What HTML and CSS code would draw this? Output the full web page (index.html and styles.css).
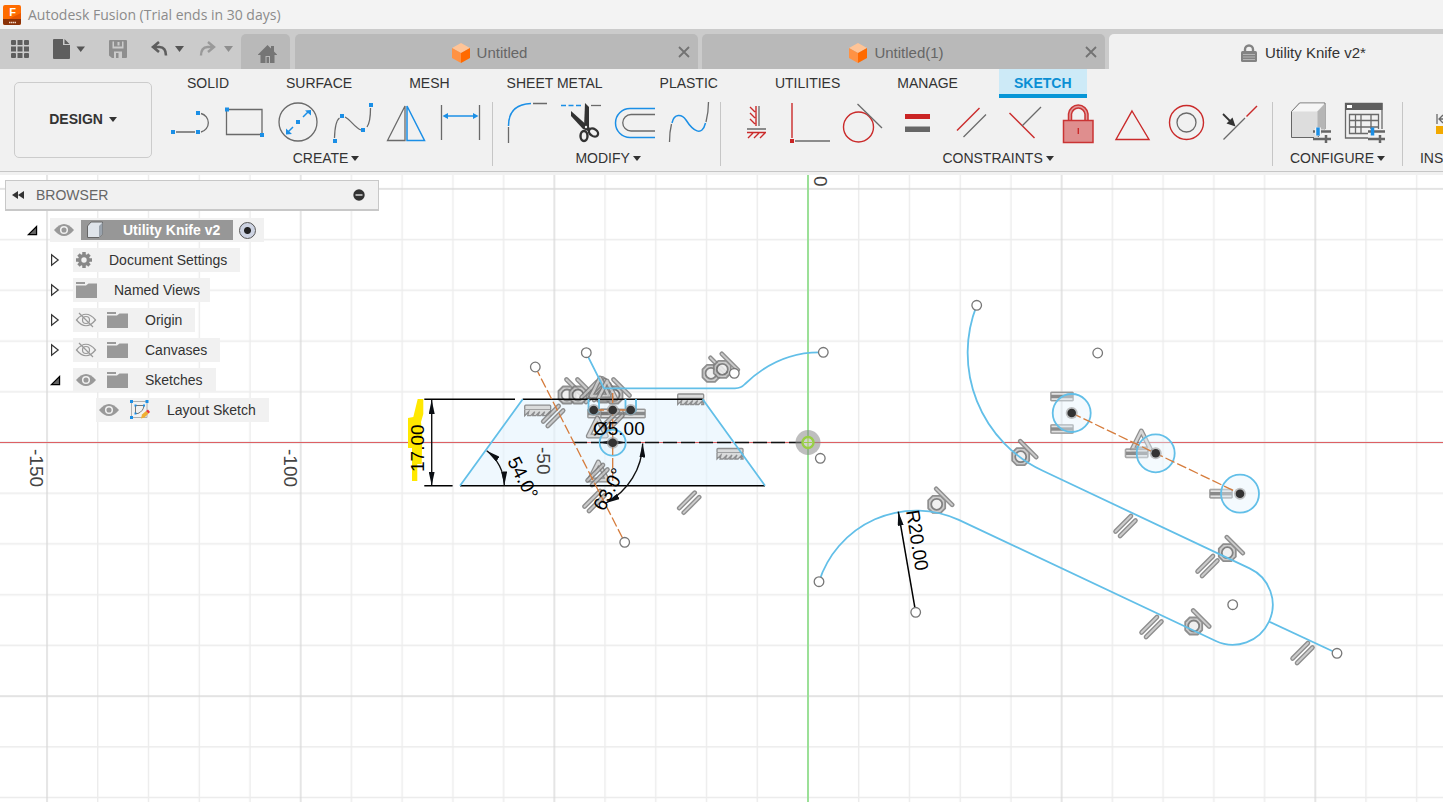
FILE: index.html
```html
<!DOCTYPE html>
<html lang="en">
<head>
<meta charset="utf-8">
<title>Autodesk Fusion</title>
<link rel="stylesheet" href="styles.css">
</head>
<body>
<div class="app">
  <header class="titlebar">
    <svg class="logo" width="18" height="20" viewBox="0 0 18 20" aria-hidden="true">
      <rect width="18" height="20" rx="2" fill="#ff6b00"/>
      <path d="M18 8V15H4z" fill="#e85600"/>
      <path d="M0 14H18V18a2 2 0 0 1-2 2H2a2 2 0 0 1-2-2z" fill="#8a3208"/>
      <text x="9.500" y="11" class="logo-letter">F</text>
      <path d="M6 17.500H13" stroke="#f3d9c8" stroke-width="1.500" stroke-dasharray="1.500 .5"/>
    </svg>
    <span>Autodesk Fusion (Trial ends in 30 days)</span>
  </header>

  <div class="tabstrip">
    <div class="quick">
      <button class="q q-grid" aria-label="Data panel"><svg width="18" height="18" viewBox="0 0 18 18"><g fill="#5e5e5e"><rect width="5" height="5" rx="1"/><rect x="6.500" width="5" height="5"/><rect x="13" width="5" height="5" rx="1"/><rect y="6.500" width="5" height="5"/><rect x="6.500" y="6.500" width="5" height="5"/><rect x="13" y="6.500" width="5" height="5"/><rect y="13" width="5" height="5" rx="1"/><rect x="6.500" y="13" width="5" height="5"/><rect x="13" y="13" width="5" height="5" rx="1"/></g></svg></button>
      <button class="q q-file" aria-label="File"><svg width="33" height="20" viewBox="0 0 33 20"><path d="M1 0H10V6H17V19a1 1 0 0 1-1 1H1a1 1 0 0 1-1-1V1a1 1 0 0 1 1-1z M11.500 0L16.500 5H11.500z" fill="#5e5e5e"/><path d="M23.500 7.500H32L27.700 13z" fill="#555"/></svg></button>
      <button class="q q-save" aria-label="Save"><svg width="18" height="18" viewBox="0 0 18 18"><path d="M1 0H17a1 1 0 0 1 1 1V17a1 1 0 0 1-1 1H3L0 15.500V1a1 1 0 0 1 1-1z" fill="#8e8e8e"/><path d="M3.500 1.500H14.500V8.500H3.500z M5 11.500H13V18H5z" fill="#cbcbcb"/><path d="M5 1H13V6.500H5z M7 13H9.500V18H7z" fill="#8e8e8e"/><path d="M9.500 2V5.500" stroke="#cbcbcb" stroke-width="2"/></svg></button>
      <button class="q q-undo" aria-label="Undo"><svg width="34" height="16" viewBox="0 0 34 16"><path d="M8 1L2 6L8 11M2.500 6H8.500Q15 6.500 15 14.500" fill="none" stroke="#5e5e5e" stroke-width="2.600"/><path d="M24 5H33L28.500 11z" fill="#555"/></svg></button>
      <button class="q" aria-label="Redo"><svg width="34" height="16" viewBox="0 0 34 16"><path d="M9 1L15 6L9 11M14.500 6H8.500Q2 6.500 2 14.500" fill="none" stroke="#999" stroke-width="2.400"/><path d="M25 5H34L29.500 11z" fill="#8e8e8e"/></svg></button>
    </div>
    <button class="home" aria-label="Home"><svg width="19" height="18" viewBox="0 0 19 18"><path d="M9.500 0L13 3.500V1H16V6.500L19 9.500V10H16.500V18H12V11H7.500V18H2.500V10H0V9.500z" fill="#757575"/><path d="M8.500 12H11V18H8.500z" fill="#757575"/></svg></button>
    <div class="doc"><button class="doc-name"><svg class="cube" width="18" height="20" viewBox="0 0 18 20"><path d="M9 0L18 5L9 10L0 5z" fill="#ffc497"/><path d="M0 5L9 10V20L0 15z" fill="#ff9243"/><path d="M18 5L9 10V20L18 15z" fill="#ff6a00"/></svg>Untitled</button><button class="close" aria-label="Close"><svg width="12" height="12" viewBox="0 0 12 12"><path d="M1 1L11 11M11 1L1 11" stroke="#737373" stroke-width="1.800"/></svg></button></div>
    <div class="doc"><button class="doc-name"><svg class="cube" width="18" height="20" viewBox="0 0 18 20"><path d="M9 0L18 5L9 10L0 5z" fill="#ffc497"/><path d="M0 5L9 10V20L0 15z" fill="#ff9243"/><path d="M18 5L9 10V20L18 15z" fill="#ff6a00"/></svg>Untitled(1)</button><button class="close" aria-label="Close"><svg width="12" height="12" viewBox="0 0 12 12"><path d="M1 1L11 11M11 1L1 11" stroke="#737373" stroke-width="1.800"/></svg></button></div>
    <div class="doc doc-active"><button class="doc-name"><svg class="cube" width="16" height="18" viewBox="0 0 16 18"><path d="M4 8V5.500a4 4 0 0 1 8 0V8" fill="none" stroke="#838383" stroke-width="2.400"/><rect y="7" width="16" height="11" rx="1.500" fill="#838383"/><path d="M2 10.500H14M2 13H14M2 15.500H14" stroke="#b5b5b5"/></svg>Utility Knife v2*</button><button class="close" aria-label="Close"></button></div>
  </div>

  <div class="ribbon">
    <button class="workspace-switch">DESIGN <i class="caret"></i></button>
    <div class="ribbon-main">
      <nav class="modes">
        <button class="mode">SOLID</button><button class="mode">SURFACE</button><button class="mode">MESH</button><button class="mode">SHEET METAL</button><button class="mode">PLASTIC</button><button class="mode">UTILITIES</button><button class="mode">MANAGE</button><button class="mode mode-on">SKETCH</button>
      </nav>
      <div class="groups">
        <section class="group group-first">
          <div class="tools">
            <button class="tool" aria-label="Line"><svg viewBox="0 0 40 40"><path class="g" d="M5 30H24M30 11.500a9.500 9.500 0 0 1 0 18.500"/><path class="bf" d="M0 28h4v4H0zM25 28h4v4h-4zM25 9h4v4h-4z"/></svg></button>
            <button class="tool" aria-label="Rectangle"><svg viewBox="0 0 40 40"><path class="g" d="M1.500 7.500H37V32.500H1.500z"/><path class="bf" d="M0 5.500h4v4H0zM35 31h4v4h-4z"/></svg></button>
            <button class="tool" aria-label="Circle"><svg viewBox="0 0 40 40"><circle class="g" cx="19" cy="20" r="19"/><path class="b" d="M9 30L14 25M24 15L29 10"/><path class="bf" d="M17 18h4v4h-4zM32 8V13.500L26 8.500zM7 32.500V26.500L13 32z"/></svg></button>
            <button class="tool" aria-label="Spline"><svg viewBox="0 0 40 40"><path class="g" d="M1.500 36Q2 19 6.500 16M12 15C18 18 22 26 28 28M34 25Q37.500 20 37.500 6"/><path class="bf" d="M0 37h4v4H0zM7 12h4v4H7zM28 26h4v4h-4zM36 1h4v4h-4z"/></svg></button>
            <button class="tool" aria-label="Mirror"><svg viewBox="0 0 40 40"><path class="g" d="M18 4V38.500H.5z"/><path class="b" d="M20 4V38.500H37.500z"/></svg></button>
            <button class="tool" aria-label="Sketch dimension"><svg viewBox="0 0 40 40"><path class="g" d="M.5 3V38M38.500 3V38"/><path class="b" d="M4 14H35"/><path class="bf" d="M1.500 14L7 11V17zM37.500 14L32 11V17z"/></svg></button>
          </div>
          <button class="group-label">CREATE <i class="caret"></i></button>
        </section>
        <section class="group">
          <div class="tools">
            <button class="tool" aria-label="Fillet"><svg viewBox="0 0 40 40"><path class="g" d="M1.500 25V41M26 1.500H40"/><path class="b" d="M1.500 24C1.500 9 10 2 24 1.500"/></svg></button>
            <button class="tool" aria-label="Trim"><svg viewBox="0 0 40 40"><path class="b" d="M0 3.500H21" stroke-dasharray="5 2.500"/><path class="g" d="M30 3.500H40"/><path d="M10 9V14L22 27L27 29L29 26z" fill="#333"/><path d="M24 1L28 5V26L23 26z" fill="#333"/><ellipse cx="23" cy="34" rx="3.500" ry="5" fill="none" stroke="#333" stroke-width="2.400"/><ellipse cx="32.500" cy="30.500" rx="5" ry="3.500" transform="rotate(35 32.500 30.500)" fill="none" stroke="#333" stroke-width="2.400"/><circle cx="25" cy="25" r="1.200" fill="#eee"/></svg></button>
            <button class="tool" aria-label="Offset"><svg viewBox="0 0 40 40"><path class="b" d="M40 6.500H15a14.500 14.500 0 0 0 0 29H40"/><path class="g" d="M40 12.500H16a8.200 8.200 0 0 0 0 16.500H40"/></svg></button>
            <button class="tool" aria-label="Blend curve"><svg viewBox="0 0 40 40"><path class="g" d="M.5 40Q.5 30 2.500 22M37 20Q39.500 10 39.500 0"/><path class="b" d="M3 21C5 11 13 12 17 18C24 29 33 35 36.500 21"/></svg></button>
          </div>
          <button class="group-label">MODIFY <i class="caret"></i></button>
        </section>
        <section class="group">
          <div class="tools">
            <button class="tool" aria-label="Horizontal/Vertical"><svg viewBox="0 0 40 40"><path class="r" d="M21 4V24M15 5L20 10M15 11L20 16M15 17L20 22M12 30.500H31M18 31L13 36M24 31L19 36M30 31L25 36"/><path class="g" d="M24 4V24M12 27H31"/></svg></button>
            <button class="tool" aria-label="Coincident"><svg viewBox="0 0 40 40"><path class="r" d="M3 1V36"/><path class="g" d="M6 39H41"/><path class="rf" d="M1 37h4v4H1z"/></svg></button>
            <button class="tool" aria-label="Tangent"><svg viewBox="0 0 40 40"><circle class="r" cx="15.500" cy="25" r="15"/><path class="g" d="M14.500 2L39 26"/></svg></button>
            <button class="tool" aria-label="Equal"><svg viewBox="0 0 40 40"><path class="rf" d="M8 12H33V17H8z"/><path d="M8 24.500H33V30H8z" fill="#666"/></svg></button>
            <button class="tool" aria-label="Parallel"><svg viewBox="0 0 40 40"><path class="r" d="M6 28.500L28.500 6"/><path class="g" d="M12.500 35L35 12.500"/></svg></button>
            <button class="tool" aria-label="Perpendicular"><svg viewBox="0 0 40 40"><path class="r" d="M4.500 11L29.500 36"/><path class="g" d="M17 24L36 5"/></svg></button>
            <button class="tool" aria-label="Fix/Unfix"><svg viewBox="0 0 40 40"><path d="M11 18V12a8.300 8.300 0 0 1 16.500 0V18" fill="none" stroke="#ca3434" stroke-width="4.500"/><path d="M11 18V12a8.300 8.300 0 0 1 16.500 0V18" fill="none" stroke="#e29a9a" stroke-width="1.500"/><path d="M4.500 18.500H34V40.500H4.500z" fill="#df8e8e" stroke="#ca3434" stroke-width="1.500"/><path class="r" d="M19.300 26V32"/></svg></button>
            <button class="tool" aria-label="MidPoint"><svg viewBox="0 0 40 40"><path class="r" d="M19 9L36 37.500H3z"/></svg></button>
            <button class="tool" aria-label="Concentric"><svg viewBox="0 0 40 40"><circle class="r" cx="19.500" cy="20.500" r="17"/><circle class="g" cx="19.500" cy="20.500" r="9.500"/></svg></button>
            <button class="tool" aria-label="Collinear"><svg viewBox="0 0 40 40"><path class="g" d="M2.500 37.500L24 16"/><path class="r" d="M25.500 14.500L36 4"/><path d="M2 12L9 19" stroke="#333" stroke-width="1.800"/><path d="M14.500 24.500L5.500 21.500L11.500 15.500z" fill="#333"/></svg></button>
          </div>
          <button class="group-label">CONSTRAINTS <i class="caret"></i></button>
        </section>
        <section class="group group-wide">
          <div class="tools">
            <button class="tool" aria-label="Configure model"><svg viewBox="0 0 40 40"><path d="M1.500 9.500L9.500 1H35V27L27.500 35.500H1.500z" fill="#ddd" stroke="#666"/><path d="M2 9.500L10 1.500H34.500L27 9.500z" fill="#f6f6f6"/><path d="M27.500 9.500L35 1.500V27L27.500 35z" fill="#b5b5b5"/><path d="M24 27.500H36V31.500H24zM24 35H36V39H24z" fill="#f1f1f1"/><path d="M23 29.500H41M23 37H41M36 33V41" stroke="#666" stroke-width="2.500"/><path d="M28 25.500V33.500" stroke="#f1f1f1" stroke-width="6"/><path d="M28 25.500V33.500" stroke="#1b8fe6" stroke-width="3.500"/></svg></button>
            <button class="tool" aria-label="Configuration table"><svg viewBox="0 0 40 40"><path class="g" d="M1.500 1.500H38V36H1.500z"/><path d="M1 1H38.500V8H1z" fill="#5e5e5e"/><path d="M3 3H8V6H3z" fill="#fff"/><path class="g" d="M5.500 12.500H34.500V31.500H5.500zM5.500 18.500H34.500M5.500 25H34.500M11.500 12.500V31.500M17 12.500V31.500M27 12.500V31.500"/><path d="M24 27H42V41H24z" fill="#f1f1f1"/><path d="M24 29.500H41M24 37H41M36 33V41" stroke="#666" stroke-width="2.500"/><path d="M28.500 25.500V33.500" stroke="#1b8fe6" stroke-width="3.500"/></svg></button>
          </div>
          <button class="group-label">CONFIGURE <i class="caret"></i></button>
        </section>
        <section class="group group-wide">
          <div class="tools">
            <button class="tool" aria-label="Measure"><svg viewBox="0 0 40 40"><path class="g" d="M1 12V22M39 12V22M3 17H37M7 13L3 17L7 21"/><path d="M0 24H40V32H0z" fill="#f2a900"/></svg></button>
          </div>
          <button class="group-label">INSPECT <i class="caret"></i></button>
        </section>
      </div>
    </div>
  </div>

  <main class="workspace">
    <svg class="canvas" role="img" aria-label="Layout Sketch">
      <defs>
        <pattern id="grid" width="253.650" height="253.650" patternUnits="userSpaceOnUse" patternTransform="translate(681.200 315.700)">
          <path d="M25.400 0V254M76.100 0V254M177.500 0V254M228.200 0V254M0 25.400H254M0 76.100H254M0 177.500H254M0 228.200H254" stroke="#ececec" stroke-width="1.400"/>
          <path d="M126.800 0V254M0 126.800H254" stroke="#dadada" stroke-width="1.400"/>
        </pattern>
        <marker id="arrow" viewBox="0 0 14 6" refX="14" refY="3" markerWidth="14" markerHeight="6" markerUnits="userSpaceOnUse" orient="auto-start-reverse"><path d="M14 3L0 0V6z" fill="#0b0f14"/></marker>
        <g id="eq"><rect x="-11.500" y="-4.500" width="23" height="9" rx="1" class="halo"/><rect x="-10.500" y="-3.500" width="21" height="1.800" class="slot"/><rect x="-10.500" y="1.700" width="21" height="1.800" class="slot"/></g>
        <g id="par"><path d="M-9.500 6.500L6 -9M-5 11L10.500 -4.500" class="tube"/><path d="M-9.500 6.500L6 -9M-5 11L10.500 -4.500" class="core"/></g>
        <g id="tan"><path d="M-4 -8.500H4L8.500 -4V4L4 8.500H-4L-8.500 4V-4z" class="ring"/><circle r="5.500" class="hole"/><path d="M-.5 -15.500L15.500 .5" class="tube"/><path d="M-.5 -15.500L15.500 .5" class="core"/></g>
        <g id="hat"><rect x="-13" y="-5.500" width="26" height="4.500" rx="1" class="bar"/><path d="M-13 -1V5L-9 1L-10 5H-7L-3 1L-5 5H-2L2 1L0 5H3L7 1L5 5H8L12 1L11 5H13V-1" class="bar"/></g>
        <g id="mid"><path d="M0 -10L9 8H-9z" class="tritube"/><path d="M0 -10L9 8H-9z" class="tricore"/></g>
        <g id="dot"><circle r="6" fill="#999" fill-opacity=".6"/><circle r="4.300" fill="#333"/></g>
        <circle id="end" r="4.800" fill="#fff" stroke="#777" stroke-width="1.300"/>
      </defs>
      <g transform="translate(0 -175)">
        <rect y="175" width="100%" height="100%" fill="url(#grid)"/>
        <path d="M522.700 399.300H702.700L765 485.700H460z" fill="#e4f3fd" fill-opacity=".6"/>
        <line x1="0" y1="442.500" x2="100%" y2="442.500" stroke="#de6064" stroke-width="1.200"/>
        <path d="M808 175V3000" stroke="#8fe08b" stroke-width="1.700"/>
        <g class="axis-label">
          <text transform="translate(30 449) rotate(90)">-150</text>
          <text transform="translate(284 449) rotate(90)">-100</text>
          <text transform="translate(537 447) rotate(90)">-50</text>
          <text transform="translate(814 176) rotate(90)">0</text>
        </g>
        <path d="M417.700 399H423.300V414L421 422L422.300 435L421.700 464H417.300V481H412V448H408V418L413.300 417z" fill="#ffe800"/>

        <g class="mark">
          <use href="#hat" x="537.700" y="410.700"/><use href="#par" x="552.700" y="415"/>
          <use href="#tan" x="567" y="395"/><use href="#tan" x="578" y="395"/><use href="#tan" x="603" y="394"/><use href="#tan" x="614" y="395"/>
          <use href="#par" x="591" y="391"/><use href="#par" x="599" y="389"/><use href="#mid" x="600" y="388"/><use href="#mid" x="607" y="391"/>
          <use href="#eq" x="599" y="413.500"/><use href="#eq" x="612" y="413.500"/><use href="#eq" x="634" y="413.500"/><use href="#par" x="612" y="420"/>
          <use href="#mid" x="597.300" y="428"/><use href="#mid" x="598.300" y="472"/><use href="#par" x="597" y="474"/><use href="#par" x="594" y="500"/>
          <use href="#hat" x="690.700" y="399.500"/><use href="#hat" x="730" y="454"/><use href="#par" x="688.700" y="501.700"/>
          <use href="#tan" x="711" y="373.300"/><use href="#tan" x="722.300" y="369.300"/>
          <use href="#tan" x="1020.700" y="456.700"/><use href="#tan" x="936.700" y="504.300"/><use href="#par" x="1207" y="565"/><use href="#tan" x="1227.300" y="552.700"/><use href="#tan" x="1193.700" y="626"/>
          <use href="#par" x="1125" y="525"/><use href="#par" x="1151" y="626"/><use href="#par" x="1302" y="652"/>
          <use href="#mid" x="1141.300" y="441"/>
        </g>
        <g class="mark"><use href="#eq" x="1062" y="396.500"/><use href="#eq" x="1062" y="429"/><use href="#eq" x="1136.700" y="453.300"/><use href="#eq" x="1221" y="493.700"/></g>

        <path d="M424.300 399.300H515M522.700 399.300H702.700M424.300 485.700H452.600M460 485.700H765" stroke="#000" stroke-width="1.600"/>
        <path d="M573 442.500H802" stroke="#111" stroke-width="1.400" stroke-dasharray="14 4"/>
        <g class="curve">
          <path d="M522.700 399.300L460 485.700M702.700 399.300L765 485.700"/>
          <path d="M586 352.700L604 388.300H735Q741 388.300 745 384Q778 352 820 352.300"/>
          <path d="M976.700 305.300A130 130 0 0 0 1042.800 470.800L1249.600 568.400A40 40 0 0 1 1215.800 641L958.800 519.900A102 102 0 0 0 819 581.700"/>
          <path d="M1269.300 621.700L1337 653.300"/>
          <path d="M588.500 399V410a5.500 5.500 0 0 0 10.500 0V399M625.500 399V410a5.500 5.500 0 0 0 10.500 0V399"/>
          <g fill="#e4f3fd" fill-opacity=".4"><circle cx="612.700" cy="442.700" r="13"/><circle cx="1071.700" cy="413" r="19"/><circle cx="1155.700" cy="453.300" r="19"/><circle cx="1240" cy="493.700" r="19"/></g>
        </g>
        <g class="orange">
          <path d="M535.300 367L624.700 542.300"/><path d="M612.700 393V486"/><path d="M594 410H631"/><path d="M1071.700 413L1240 493.700"/>
        </g>

        <g class="dim">
          <path d="M431.700 400V485.500"/><path d="M486.700 450.700A44 44 0 0 1 504.300 485.500"/><path d="M642.700 443.500A69 69 0 0 1 606 503"/><path d="M600 442.500H625"/>
        </g>
        <path d="M915.700 612.300L898.300 511.700" stroke="#000" stroke-width="1.500" marker-end="url(#arrow)"/>
        <g class="dim-label">
          <text transform="translate(424 472) rotate(-90)">17.00</text>
          <text transform="translate(507 461) rotate(63)">54.0°</text>
          <text transform="translate(604 512) rotate(-62)">63.0°</text>
          <text x="593" y="435">Ø5.00</text>
          <text transform="translate(906 511) rotate(81)">R20.00</text>
        </g>

        <use href="#dot" x="593.700" y="410"/><use href="#dot" x="612.700" y="410"/><use href="#dot" x="630.700" y="410"/><use href="#dot" x="612.700" y="442.700"/>
        <use href="#dot" x="1071.700" y="413"/><use href="#dot" x="1155.700" y="453.300"/><use href="#dot" x="1240" y="493.700"/>
        <circle cx="808" cy="442.500" r="12.500" fill="#888" fill-opacity=".55"/><circle cx="808" cy="442.500" r="5.500" fill="#d2d2d2" stroke="#98cf45" stroke-width="2.400"/><path d="M808 438V447M804 442.500H812" stroke="#98cf45"/>
        <use href="#end" x="535.300" y="367"/><use href="#end" x="586.300" y="352.700"/><use href="#end" x="624.700" y="542.300"/><use href="#end" x="823.300" y="352.300"/><use href="#end" x="734.300" y="373.300"/><use href="#end" x="820.300" y="458.300"/><use href="#end" x="976.700" y="305.300"/><use href="#end" x="1097.700" y="353"/><use href="#end" x="819" y="581.700"/><use href="#end" x="915.700" y="612.300"/><use href="#end" x="1232.700" y="604.700"/><use href="#end" x="1337" y="653.300"/>
      </g>
    </svg>

    <aside class="browser">
      <div class="browser-head">
        <button class="flat" aria-label="Collapse panel"><svg width="12" height="8" viewBox="0 0 12 8"><path d="M6 0V8L0 4zM12 0V8L6 4z" fill="#333"/></svg></button>
        <span class="browser-title">BROWSER</span>
        <button class="flat" aria-label="Hide panel"><svg width="12" height="12" viewBox="0 0 12 12"><circle cx="6" cy="6" r="5.700" fill="#333"/><path d="M2.500 6H9.500" stroke="#ccc" stroke-width="1.600"/></svg></button>
      </div>
      <ul class="tree">
        <li class="row row-root">
          <button class="toggle" aria-label="Collapse"><svg width="9" height="9" viewBox="0 0 10 10"><path d="M9.500 .5V9.500H.5z" fill="#666" stroke="#000" stroke-width="1.400"/></svg></button>
          <div class="chip"><button class="flat eye" aria-label="Visibility"><svg width="20" height="12" viewBox="0 0 20 12"><path d="M0 6Q10 -6 20 6Q10 18 0 6z" fill="#999"/><circle cx="10" cy="6" r="3.300" fill="#999" stroke="#f1f1f1" stroke-width="1.500"/></svg></button>
            <span class="root-name"><svg class="root-cube" width="18" height="18" viewBox="0 0 18 18"><path d="M1.500 5L5 1H16.500V13L13 16.500H1.500z" fill="#dfe4ea" stroke="#666"/><path d="M13 5L16.500 1.500V13L13 16z" fill="#9aa3ad"/></svg><b>Utility Knife v2</b></span>
            <input class="activate" type="radio" checked aria-label="Activate Utility Knife v2"></div>
        </li>
        <li class="row"><button class="toggle" aria-label="Expand"><svg width="8" height="12" viewBox="0 0 8 12"><path d="M.6 .8L7.200 6L.6 11.200z" fill="#fff" stroke="#333" stroke-width="1.200"/></svg></button>
          <div class="chip"><svg class="gear" width="16" height="16" viewBox="-8 -8 16 16"><g stroke="#888" stroke-width="3.500"><path d="M0 -8V8M-8 0H8M-5.500 -5.500L5.500 5.500M5.500 -5.500L-5.500 5.500"/></g><circle r="4.300" fill="#f1f1f1" stroke="#888" stroke-width="3.200"/></svg><span class="name">Document Settings</span></div></li>
        <li class="row"><button class="toggle" aria-label="Expand"><svg width="8" height="12" viewBox="0 0 8 12"><path d="M.6 .8L7.200 6L.6 11.200z" fill="#fff" stroke="#333" stroke-width="1.200"/></svg></button>
          <div class="chip chip-views"><svg class="folder" viewBox="0 0 21 16"><path d="M0 0H9V2H0zM0 3.500H10L12.500 1.500H21V16H0z" fill="#999"/></svg><span class="name">Named Views</span></div></li>
        <li class="row"><button class="toggle" aria-label="Expand"><svg width="8" height="12" viewBox="0 0 8 12"><path d="M.6 .8L7.200 6L.6 11.200z" fill="#fff" stroke="#333" stroke-width="1.200"/></svg></button>
          <div class="chip"><button class="flat eye" aria-label="Visibility"><svg width="20" height="14" viewBox="0 0 20 14"><path d="M.5 7Q10 -4.500 19.500 7Q10 18.500 .5 7z M3 0L17 14" fill="none" stroke="#999" stroke-width="1.200"/><circle cx="10" cy="7" r="3.500" fill="none" stroke="#999" stroke-width="1.200"/></svg></button><svg class="folder" viewBox="0 0 21 16"><path d="M0 0H9V2H0zM0 3.500H10L12.500 1.500H21V16H0z" fill="#999"/></svg><span class="name">Origin</span></div></li>
        <li class="row"><button class="toggle" aria-label="Expand"><svg width="8" height="12" viewBox="0 0 8 12"><path d="M.6 .8L7.200 6L.6 11.200z" fill="#fff" stroke="#333" stroke-width="1.200"/></svg></button>
          <div class="chip"><button class="flat eye" aria-label="Visibility"><svg width="20" height="14" viewBox="0 0 20 14"><path d="M.5 7Q10 -4.500 19.500 7Q10 18.500 .5 7z M3 0L17 14" fill="none" stroke="#999" stroke-width="1.200"/><circle cx="10" cy="7" r="3.500" fill="none" stroke="#999" stroke-width="1.200"/></svg></button><svg class="folder" viewBox="0 0 21 16"><path d="M0 0H9V2H0zM0 3.500H10L12.500 1.500H21V16H0z" fill="#999"/></svg><span class="name">Canvases</span></div></li>
        <li class="row"><button class="toggle" aria-label="Collapse"><svg width="9" height="9" viewBox="0 0 10 10"><path d="M9.500 .5V9.500H.5z" fill="#666" stroke="#000" stroke-width="1.400"/></svg></button>
          <div class="chip"><button class="flat eye" aria-label="Visibility"><svg width="20" height="12" viewBox="0 0 20 12"><path d="M0 6Q10 -6 20 6Q10 18 0 6z" fill="#999"/><circle cx="10" cy="6" r="3.300" fill="#999" stroke="#f1f1f1" stroke-width="1.500"/></svg></button><svg class="folder" viewBox="0 0 21 16"><path d="M0 0H9V2H0zM0 3.500H10L12.500 1.500H21V16H0z" fill="#999"/></svg><span class="name">Sketches</span></div></li>
        <li class="row row-leaf"><div class="chip"><button class="flat eye" aria-label="Visibility"><svg width="20" height="12" viewBox="0 0 20 12"><path d="M0 6Q10 -6 20 6Q10 18 0 6z" fill="#999"/><circle cx="10" cy="6" r="3.300" fill="#999" stroke="#f1f1f1" stroke-width="1.500"/></svg></button>
          <svg width="20" height="20" viewBox="0 0 20 20"><path d="M1.500 1.500H17V17.500H1.500z" fill="none" stroke="#b0b0b0"/><path d="M5.500 5.500H14Q13.500 11 8 13.500H5.500z" fill="none" stroke="#777"/><path d="M0 0h3v3H0zM15.500 0h3v3h-3zM0 16h3v3H0zM4.500 4.500h2v2h-2zM13 4.500h2v2h-2zM4.500 12.500h2v2h-2z" fill="#1b8fe6"/><path d="M11 18.500L12 14.500L16 11L18.500 13.500L14.500 17.500z" fill="#f0ae32"/><path d="M16 11L18 9.500L20 12L18.500 13.500z" fill="#e5343a"/></svg><span class="name">Layout Sketch</span></div></li>
      </ul>
    </aside>
  </main>
</div>
</body>
</html>
```
FILE: styles.css
```css
* { box-sizing: border-box; }
body { margin: 0; font: 14px/20px "Liberation Sans", Arial, sans-serif; color: #333; background: #fff; }
button { margin: 0; padding: 0; border: 0; background: none; font: inherit; color: inherit; white-space: nowrap; }
svg { display: block; flex: none; overflow: visible; }
.app { display: flex; flex-direction: column; height: 100vh; overflow: hidden; }

.titlebar { display: flex; align-items: center; gap: 7px; flex: none; height: 29px; padding-left: 3px; background: #f3f3f3; color: #8b8b8b; font: 14px/20px "Open Sans", "Noto Sans", sans-serif; }
.logo-letter { font: bold 11px "Liberation Sans", sans-serif; fill: #fff; text-anchor: middle; }

.tabstrip { display: flex; align-items: flex-end; flex: none; height: 40px; background: #cbcbcb; overflow: hidden; }
.quick { display: flex; align-items: center; align-self: stretch; flex: none; width: 241px; padding-left: 11px; }
.q-grid { margin-right: 24px; }
.q-file { margin-right: 23px; }
.q-save { margin-right: 24px; }
.q-undo { margin-right: 14px; }
.home { display: flex; justify-content: center; align-items: center; flex: none; width: 49px; height: 35px; margin-right: 5px; padding: 4px 0 0 3px; border-radius: 5px 5px 0 0; background: #b9b9b9; }
.doc { display: flex; align-items: center; flex: none; width: 403px; height: 35px; margin-right: 4px; padding-right: 8px; border-radius: 5px 5px 0 0; background: #b9b9b9; color: #666; font-size: 15px; }
.doc-name { display: flex; flex: 1; justify-content: center; align-items: center; gap: 7px; padding: 2px 0 0 6px; }
.doc-active { background: #f1f1f1; color: #333; }
.doc-active .doc-name { gap: 8px; }
.close { width: 12px; }

.ribbon { display: flex; flex: none; height: 106px; border-bottom: 3px solid #f1f1f1; background: #f1f1f1; box-shadow: inset 0 -1px #c6c6c6; overflow: hidden; }
.workspace-switch { flex: none; width: 138px; height: 76px; margin: 13px 0 0 14px; padding-bottom: 2px; border: 1px solid #ccc; border-radius: 5px; font-weight: bold; }
.caret { display: inline-block; margin-left: 2px; border: 4px solid transparent; border-top: 5px solid #333; border-bottom: 0; vertical-align: 2px; }
.group-label .caret { margin-left: -1px; }
.ribbon-main { flex: 1; min-width: 0; padding-left: 19px; }
.modes { display: flex; gap: 25px; height: 29px; }
.mode { padding: 0 16px 1px; }
.mode-on { border-bottom: 4px solid #0696d7; padding: 3px 15px 0; background: #cdeaf7; color: #0a8fd4; font-weight: bold; }
.groups { display: flex; padding-top: 4px; }
.group { display: flex; flex: none; flex-direction: column; align-items: center; height: 64px; padding: 0 11px 0 14px; border-right: 1px solid #c6c6c6; }
.group-first { padding-left: 0; }
.group-wide { padding: 0 17px; }
.tools { display: flex; gap: 14px; }
.tool { width: 40px; height: 40px; }
.tool svg { width: 40px; height: 40px; }
.group-label { padding-top: 6px; }
.g { fill: none; stroke: #6a6a6a; stroke-width: 1.3; }
.b { fill: none; stroke: #1b8fe6; stroke-width: 1.5; }
.bf { fill: #1b8fe6; }
.r { fill: none; stroke: #ca2a2a; stroke-width: 1.4; }
.rf { fill: #ca2424; }

.workspace { position: relative; flex: 1; min-height: 0; overflow: hidden; }
.canvas { position: absolute; inset: 0; width: 100%; height: 100%; }
.axis-label { font-size: 19px; fill: #444; }
.dim-label { font-size: 19px; fill: #000; }
.curve { fill: none; stroke: #62bfe8; stroke-width: 1.8; }
.orange { stroke: #d67c3c; stroke-width: 1.3; stroke-dasharray: 10 3; }
.dim path { fill: none; stroke: #111; stroke-width: 1.4; marker-start: url(#arrow); marker-end: url(#arrow); }
.bar { fill: #d6d6d6; stroke: #7c7c7c; stroke-width: 1.3; }
.halo { fill: #777; stroke: #999; }
.slot { fill: #ddd; }
.tube { fill: none; stroke: #7c7c7c; stroke-width: 4.6; stroke-linecap: round; }
.core { fill: none; stroke: #c4c4c4; stroke-width: 1.8; stroke-linecap: round; }
.ring { fill: #c4c4c4; stroke: #7c7c7c; stroke-width: 1.8; stroke-linejoin: round; }
.hole { fill: #eee; stroke: #6c6c6c; stroke-width: 1.8; }
.tritube { fill: none; stroke: #7c7c7c; stroke-width: 5; stroke-linejoin: round; }
.tricore { fill: none; stroke: #d0d0d0; stroke-width: 2.4; stroke-linejoin: round; }
.mark use { opacity: .85; }

.browser { position: relative; width: 374px; margin: 5px 0 0 5px; }
.browser-head { display: flex; align-items: center; height: 31px; padding: 0 13px 0 6px; border: 1px solid #c8c8c8; border-bottom-width: 2px; background: #f1f1f1; color: #666; }
.browser-title { flex: 1; padding-left: 12px; }
.flat { display: block; flex: none; }
.tree { margin: 4px 0 0; padding: 0; list-style: none; }
.row { display: flex; align-items: center; height: 30px; padding-left: 46px; }
.row-root { padding-left: 23px; }
.row-leaf { padding-left: 91px; }
.toggle { flex: none; width: 22px; }
.chip { display: flex; align-items: center; height: 24px; padding: 0 13px 0 3px; background: #f1f1f1; }
.chip-views { padding-right: 10px; }
.eye { margin-right: 11px; }
.root-name { display: flex; align-items: center; height: 20px; padding-right: 13px; background: #979797; color: #fff; }
.row-root .chip { padding-right: 8px; }
.row-root .eye { margin-left: 1px; margin-right: 7px; }
.folder { width: 21px; height: 16px; }
.name { padding-left: 17px; }
.root-cube { margin: 0 19px 0 5px; }
.activate { appearance: none; width: 17px; height: 17px; margin: 0 0 0 6px; border: 1px solid #555; border-radius: 50%; background: radial-gradient(circle, #222 0 3px, #cdd3e2 4px); }
```
